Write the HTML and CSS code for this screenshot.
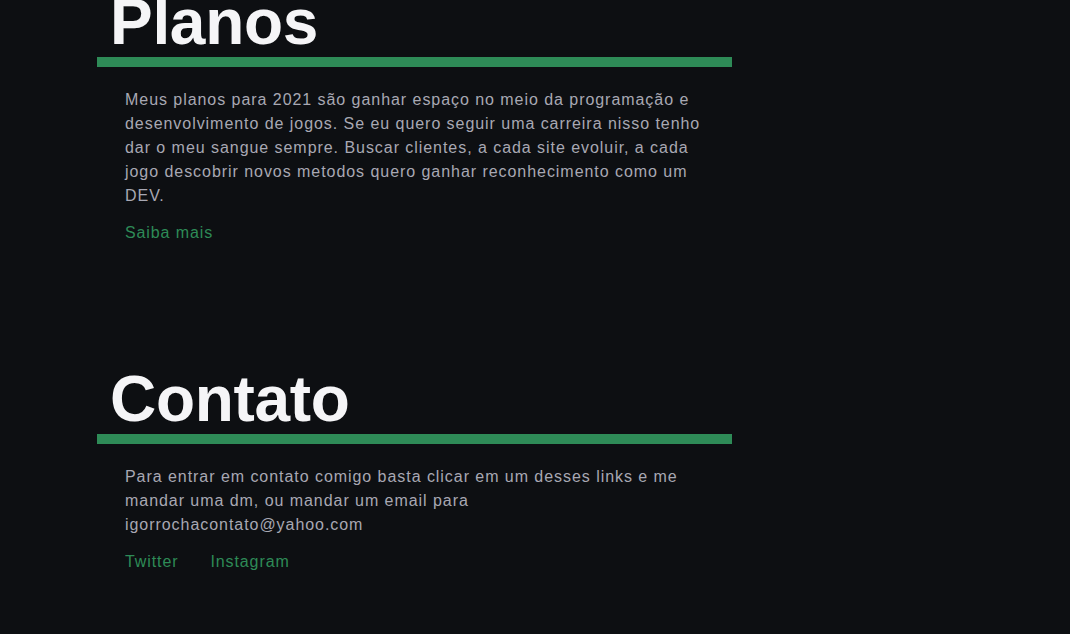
FILE: index.html
```html
<!DOCTYPE html>
<html lang="pt-BR">
<head>
<meta charset="utf-8">
<title>Igor Rocha</title>
<link rel="stylesheet" href="styles.css">
</head>
<body>
<main class="page">
  <section class="block block-first">
    <h2 class="block-title">Planos</h2>
    <p class="block-text">Meus planos para 2021 são ganhar espaço no meio da programação e desenvolvimento de jogos. Se eu quero seguir uma carreira nisso tenho dar o meu sangue sempre. Buscar clientes, a cada site evoluir, a cada jogo descobrir novos metodos quero ganhar reconhecimento como um DEV.</p>
    <div class="block-links"><a href="#" class="link">Saiba mais</a></div>
  </section>
  <section class="block">
    <h2 class="block-title">Contato</h2>
    <p class="block-text">Para entrar em contato comigo basta clicar em um desses links e me mandar uma dm, ou mandar um email para igorrochacontato@yahoo.com</p>
    <div class="block-links"><a href="#" class="link">Twitter</a><a href="#" class="link">Instagram</a></div>
  </section>
</main>
</body>
</html>
```

FILE: styles.css
```css
html, body {
  margin: 0;
  padding: 0;
  background: #0d0f12;
  height: 100%;
  overflow: hidden;
}
body {
  font-family: "Liberation Sans", Arial, sans-serif;
  color: #a8a8b3;
}
.page {
  width: 635px;
  margin-left: 97px;
  display: flex;
  flex-direction: column;
  gap: 119px;
}
.block-first {
  margin-top: -13px;
}
.block-title {
  margin: 0;
  padding-left: 13px;
  font-size: 64px;
  line-height: 70px;
  font-weight: bold;
  color: #f5f5f7;
  letter-spacing: -0.3px;
  border-bottom: 10px solid #2e8b57;
}
.block-text {
  margin: 21px 0 0 28px;
  max-width: 580px;
  font-size: 16px;
  line-height: 24px;
  letter-spacing: 0.95px;
}
.block-links {
  margin: 13px 0 0 28px;
  display: flex;
  gap: 32px;
  font-size: 16px;
  line-height: 24px;
  letter-spacing: 0.9px;
}
.link {
  color: #2e8b57;
  text-decoration: none;
}
```
